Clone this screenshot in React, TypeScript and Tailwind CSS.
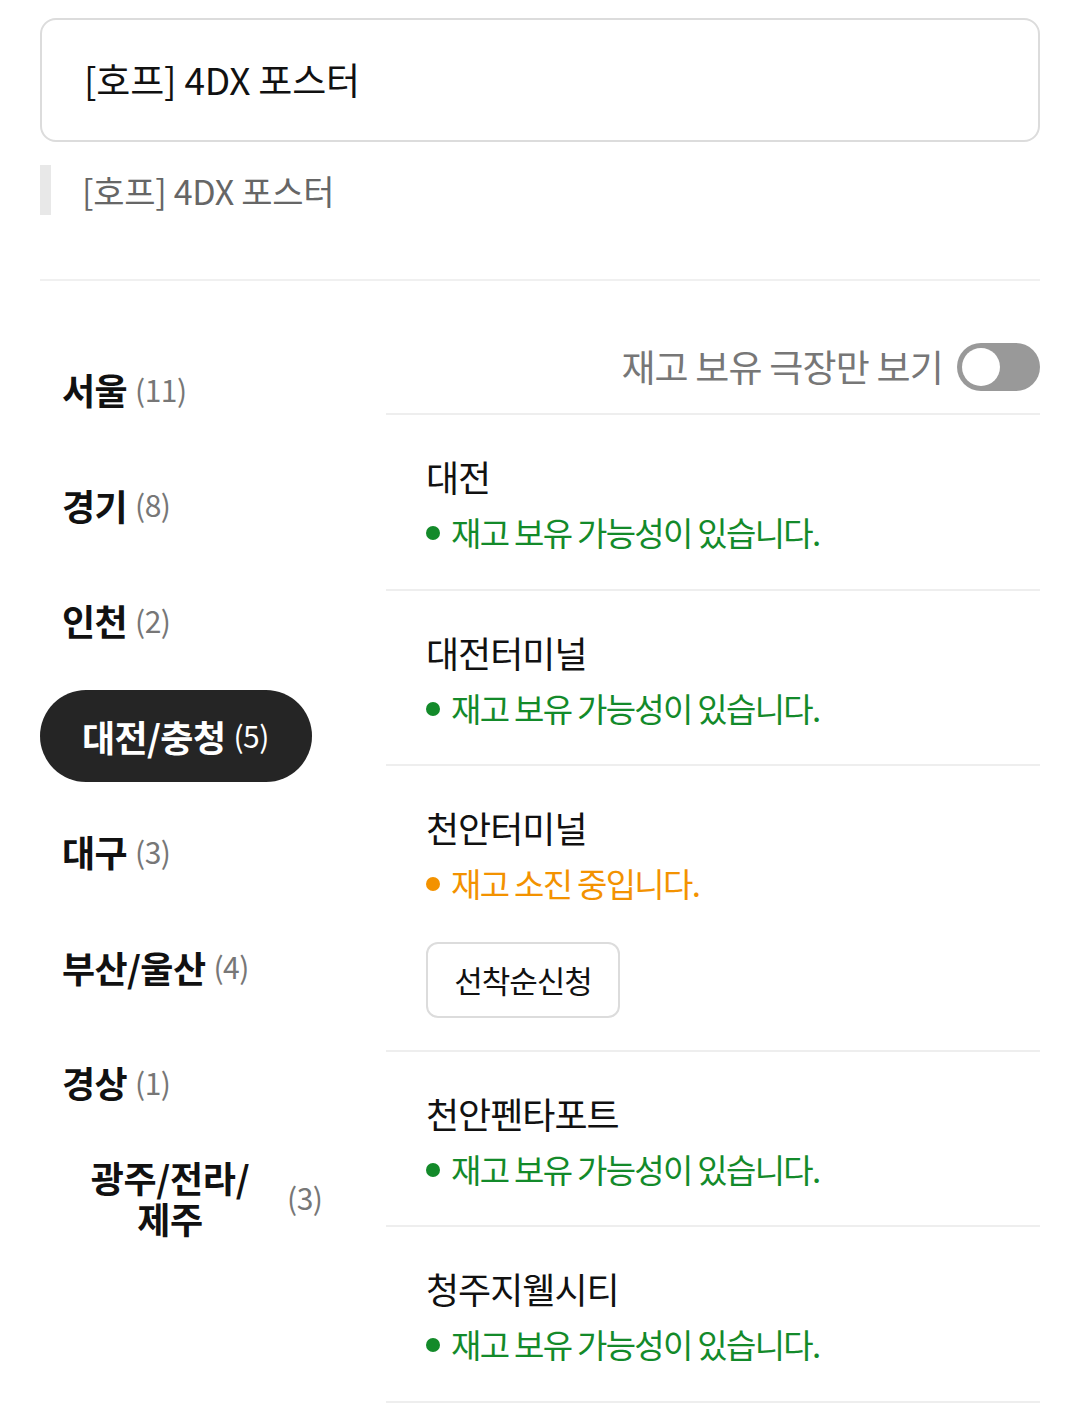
import React from "react";

const regions = [
  { name: "서울", count: 11 },
  { name: "경기", count: 8 },
  { name: "인천", count: 2 },
  { name: "대전/충청", count: 5, active: true },
  { name: "대구", count: 3 },
  { name: "부산/울산", count: 4 },
  { name: "경상", count: 1 },
];

type Theater = { name: string; ok: boolean; button?: boolean };
const theaters: Theater[] = [
  { name: "대전", ok: true },
  { name: "대전터미널", ok: true },
  { name: "천안터미널", ok: false, button: true },
  { name: "천안펜타포트", ok: true },
  { name: "청주지웰시티", ok: true },
];

export default function App() {
  return (
    <div
      className="w-[1080px] min-h-[1418px] bg-white px-[40px] pt-[18px] text-[#111]"
      style={{ fontFamily: '"Noto Sans CJK KR", "Noto Sans", sans-serif' }}
    >
      <div className="flex h-[124px] items-center rounded-[16px] border-2 border-[#dcdcdc] px-[42px]">
        <span className="text-[37px] tracking-[-0.2px] text-[#111]">[호프] 4DX 포스터</span>
      </div>
      <div className="mt-[23px] flex h-[50px] items-center border-l-[11px] border-[#e8e8e8] pl-[31px]">
        <span className="text-[34px] tracking-[-0.3px] text-[#666]">[호프] 4DX 포스터</span>
      </div>
      <div className="mt-[64px] h-[2px] bg-[#f0f0f0]" />
      <div className="mt-[62px] flex">
        <div className="flex w-[346px] shrink-0 flex-col gap-[23.5px]">
          {regions.map((r) => (
            <div
              key={r.name}
              className={
                r.active
                  ? "flex h-[92px] w-[272px] items-center rounded-full bg-[#252525] pl-[42px] text-white"
                  : "flex h-[92px] items-center pl-[22px]"
              }
            >
              <span className="text-[36px] font-bold tracking-[-0.6px]">{r.name}</span>
              <span
                className={
                  r.active
                    ? "ml-[8px] text-[30px] tracking-[-0.5px] text-white"
                    : "ml-[8px] text-[30px] tracking-[-0.5px] text-[#777]"
                }
              >
                ({r.count})
              </span>
            </div>
          ))}
          <div className="flex h-[92px] items-center pl-[46px]">
            <span className="w-[168px] text-center text-[36px] font-bold leading-[41px] tracking-[-0.3px]">
              광주/전라/
              <br />
              제주
            </span>
            <span className="ml-[33px] text-[30px] tracking-[-0.5px] text-[#777]">(3)</span>
          </div>
        </div>
        <div className="flex-1">
          <div className="flex h-[48px] items-center justify-end gap-[14px]">
            <span className="text-[37px] tracking-[-0.8px] text-[#777]">재고 보유 극장만 보기</span>
            <div className="flex h-[48px] w-[83px] items-center rounded-full bg-[#999] px-[5px]">
              <div className="h-[38px] w-[38px] rounded-full bg-white" />
            </div>
          </div>
          <div className="mt-[22px] h-[2px] bg-[#eeeeee]" />
          {theaters.map((t) => (
            <div key={t.name} className="border-b-2 border-[#eeeeee] pl-[40px] pt-[37px] pb-[31.5px]">
              <div className="flex h-[48px] items-center text-[36px] tracking-[-1px] text-[#111]">
                {t.name}
              </div>
              <div className="mt-[9px] flex h-[48px] items-center">
                <span
                  className={
                    t.ok
                      ? "mr-[11px] h-[14px] w-[14px] rounded-full bg-[#138a2a]"
                      : "mr-[11px] h-[14px] w-[14px] rounded-full bg-[#f39200]"
                  }
                />
                <span
                  className={
                    t.ok
                      ? "text-[33px] tracking-[-1.7px] text-[#138a2a]"
                      : "text-[33px] tracking-[-1.7px] text-[#f39200]"
                  }
                >
                  {t.ok ? "재고 보유 가능성이 있습니다." : "재고 소진 중입니다."}
                </span>
              </div>
              {t.button && (
                <button className="mt-[34px] flex h-[76px] w-[194px] items-center justify-center rounded-[12px] border-2 border-[#dcdcdc] bg-white text-[31px] tracking-[-1px] text-[#111]">
                  선착순신청
                </button>
              )}
            </div>
          ))}
        </div>
      </div>
    </div>
  );
}
